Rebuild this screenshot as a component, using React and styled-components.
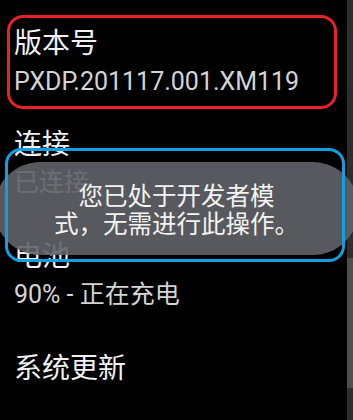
import React from "react";
import styled, { createGlobalStyle } from "styled-components";

const GlobalStyle = createGlobalStyle`
  html, body {
    margin: 0;
    padding: 0;
    background: #000;
  }
`;

const fontStack = `"Roboto", "Noto Sans CJK SC", sans-serif`;

const Screen = styled.div`
  position: relative;
  width: 353px;
  height: 420px;
  overflow: hidden;
  background: #000;
  font-family: ${fontStack};
`;

const List = styled.div`
  display: flex;
  flex-direction: column;
  padding-top: 15px;
`;

const Highlight = styled.div`
  margin: 0 16px 0 7px;
  padding: 10px 4px 9px 4px;
  border: 3px solid ${(p) => p.color};
  border-radius: 16px;
`;

const Row = styled.div`
  display: flex;
  flex-direction: column;
  gap: 7px;
  padding: ${(p) => (p.boxed ? "0" : "20px 14px 0 14px")};
  height: ${(p) => (p.boxed ? "auto" : "112px")};
  box-sizing: border-box;
`;

const Title = styled.div`
  font-size: 28px;
  line-height: 32px;
  color: #f1f1f1;
`;

const Summary = styled.div`
  font-size: 25px;
  line-height: 30px;
  color: #d4d4d4;
`;

const Frame = styled.div`
  position: absolute;
  left: 5px;
  top: 148px;
  width: 340px;
  height: 114px;
  box-sizing: border-box;
  border: 3px solid #139ee3;
  border-radius: 16px;
  z-index: 3;
`;

const Toast = styled.div`
  position: absolute;
  left: -6px;
  top: 162px;
  width: 365px;
  height: 93px;
  border-radius: 47px;
  background: rgba(98, 99, 104, 0.9);
  display: flex;
  flex-direction: column;
  align-items: center;
  justify-content: center;
  z-index: 2;
`;

const ToastLine = styled.div`
  font-family: "Noto Sans CJK SC", sans-serif;
  font-size: 24.5px;
  line-height: 28px;
  color: #f4f4f4;
  white-space: nowrap;
`;

const ScrollTrack = styled.div`
  position: absolute;
  top: 0;
  right: 0;
  width: 6px;
  height: 420px;
  background: #2e2e2e;
  z-index: 1;
`;

const ScrollThumb = styled.div`
  position: absolute;
  left: 0;
  top: 258px;
  width: 6px;
  height: 130px;
  background: #4f4f4f;
`;

const items = [
  { title: "连接", summary: "已连接" },
  { title: "电池", summary: "90% - 正在充电" },
  { title: "系统更新" },
];

export default function App() {
  return (
    <Screen>
      <GlobalStyle />
      <List>
        <Highlight color="#e8212b">
          <Row boxed>
            <Title>版本号</Title>
            <Summary>PXDP.201117.001.XM119</Summary>
          </Row>
        </Highlight>
        {items.map((it) => (
          <Row key={it.title}>
            <Title>{it.title}</Title>
            {it.summary && <Summary>{it.summary}</Summary>}
          </Row>
        ))}
      </List>
      <ScrollTrack>
        <ScrollThumb />
      </ScrollTrack>
      <Toast>
        <ToastLine>您已处于开发者模</ToastLine>
        <ToastLine>式，无需进行此操作。</ToastLine>
      </Toast>
      <Frame />
    </Screen>
  );
}
